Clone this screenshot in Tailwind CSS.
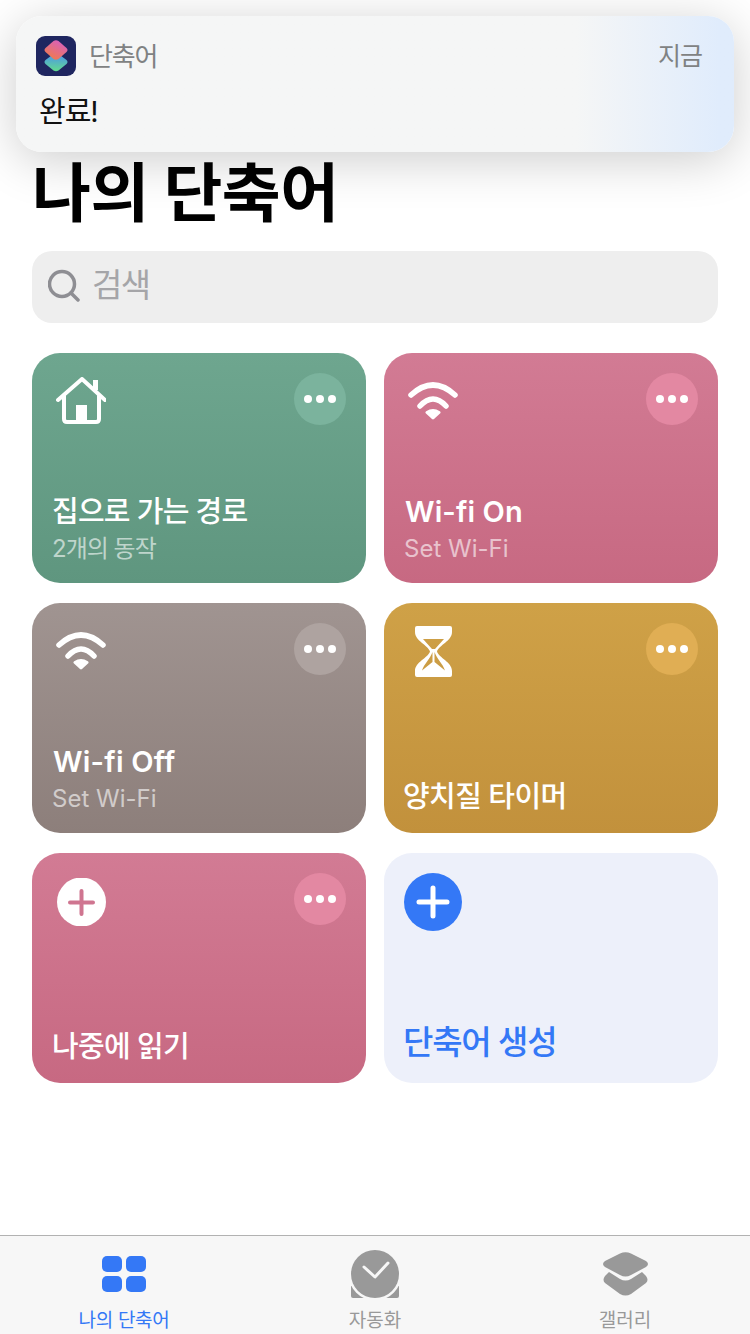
<!DOCTYPE html>
<html lang="ko">
<head>
    <meta charset="UTF-8">
    <meta name="viewport" content="width=device-width, initial-scale=1.0">
    <title>나의 단축어</title>
    <script src="https://cdn.jsdelivr.net/npm/@tailwindcss/browser@4"></script>
</head>
<body class="bg-white font-['Inter','Noto_Sans_CJK_KR',sans-serif]">
<div class="relative w-[750px] h-[1334px] overflow-hidden flex flex-col">

    <!-- notification banner -->
    <div class="absolute left-4 top-4 w-[718px] h-[136px] rounded-[26px] bg-gradient-to-r from-[#f5f6f6] from-78% to-[#e0ecfc] to-98% shadow-[0_8px_50px_rgba(0,0,0,0.2)] z-10">
        <div class="flex items-center justify-between pl-5 pr-8 pt-5">
            <div class="flex items-center gap-[13px]">
                <svg width="40" height="40" viewBox="0 0 40 40">
                    <defs>
                        <linearGradient id="s1" x1="0.8" y1="0" x2="0.2" y2="1"><stop offset="0" stop-color="#d65fc4"/><stop offset="1" stop-color="#f27c45"/></linearGradient>
                        <linearGradient id="s2" x1="0.5" y1="0" x2="0.5" y2="1"><stop offset="0" stop-color="#4a8ff2"/><stop offset="1" stop-color="#62dc8e"/></linearGradient>
                    </defs>
                    <rect width="40" height="40" rx="9" fill="#1f2660"/>
                    <path d="M17.500 18 Q20 16 22.500 18 L30.500 24 Q32.500 26 30.500 28 L22.500 34.500 Q20 36 17.500 34.500 L9.500 28 Q7.500 26 9.500 24 Z" fill="url(#s2)"/>
                    <path d="M17.500 5 Q20 3.500 22.500 5 L30.500 12 Q32.500 14 30.500 16 L22.500 23 Q20 24.500 17.500 23 L9.500 16 Q7.500 14 9.500 12 Z" fill="url(#s1)"/>
                </svg>
                <span class="text-[26px] text-[#7f8283] leading-none tracking-[-1.2px] mt-[2px]">단축어</span>
            </div>
            <span class="text-[25px] text-[#7f8283] leading-none tracking-[-1px]">지금</span>
        </div>
        <p class="pl-[23px] mt-4 text-[29px] leading-[40px] text-[#111] tracking-[-1px]">완료!</p>
    </div>

    <main class="flex-1 px-8 pt-[153px]">
        <h1 class="text-[64px] leading-[80px] font-bold text-black tracking-[-0.5px]">나의 단축어</h1>

        <div class="mt-[18px] h-[72px] rounded-[20px] bg-[#eeeeee] flex items-center pl-4 gap-3">
            <svg width="32" height="36" viewBox="0 0 32 36" fill="none" stroke="#8e8e93" stroke-width="3.500" stroke-linecap="round">
                <circle cx="14" cy="15" r="12.500"/>
                <path d="M23 24 L30 31"/>
            </svg>
            <span class="text-[33px] text-[#a5a5a8] leading-none tracking-[-1.5px] -mt-1">검색</span>
        </div>

        <div class="mt-[30px] grid grid-cols-[334px_334px] gap-x-[18px] gap-y-5">

            <div class="h-[230px] rounded-[28px] bg-gradient-to-b from-[#6ea68f] to-[#5f967f] flex flex-col justify-between px-5 pt-5 pb-4">
                <div class="flex justify-between items-start">
                    <svg class="ml-1 mt-1" width="50" height="48" viewBox="0 0 50 48" fill="none" stroke="#fff" stroke-width="4" stroke-linecap="round" stroke-linejoin="round">
                        <path d="M2 23 L26 2 L49 23"/>
                        <path d="M8 19 V42 Q8 45 11 45 H40 Q43 45 43 42 V19"/>
                        <path d="M39.500 3 V13" stroke-width="5" stroke-linecap="butt"/>
                        <rect x="20" y="28" width="11" height="16" fill="#fff" stroke="none"/>
                    </svg>
                    <div class="w-[52px] h-[52px] rounded-full bg-[#7bb39d] flex items-center justify-center gap-1">
                        <span class="w-2 h-2 rounded-full bg-white"></span><span class="w-2 h-2 rounded-full bg-white"></span><span class="w-2 h-2 rounded-full bg-white"></span>
                    </div>
                </div>
                <div>
                    <p class="text-[29px] leading-[38px] font-medium text-white tracking-[-0.75px]">집으로 가는 경로</p>
                    <p class="text-[24px] leading-[36px] text-white/60 tracking-[-1px]">2개의 동작</p>
                </div>
            </div>

            <div class="h-[230px] rounded-[28px] bg-gradient-to-b from-[#d27b94] to-[#c76982] flex flex-col justify-between px-5 pt-5 pb-4">
                <div class="flex justify-between items-start">
                    <svg class="ml-1 mt-[9px]" width="50" height="38" viewBox="0 0 50 38">
                        <path d="M3 13 Q25 -7 47 13 M12 24 Q25 10 38 24" fill="none" stroke="#fff" stroke-width="5.500" stroke-linecap="round"/>
                        <path d="M25 36 L19 30.500 Q25 26.500 31 30.500 Z" fill="#fff" stroke="#fff" stroke-width="3" stroke-linejoin="round"/>
                    </svg>
                    <div class="w-[52px] h-[52px] rounded-full bg-[#e388a2] flex items-center justify-center gap-1">
                        <span class="w-2 h-2 rounded-full bg-white"></span><span class="w-2 h-2 rounded-full bg-white"></span><span class="w-2 h-2 rounded-full bg-white"></span>
                    </div>
                </div>
                <div>
                    <p class="text-[29px] leading-[38px] font-semibold text-white tracking-[0.1px] pl-px">Wi-fi On</p>
                    <p class="text-[24px] leading-[36px] text-white/60">Set Wi-Fi</p>
                </div>
            </div>

            <div class="h-[230px] rounded-[28px] bg-gradient-to-b from-[#a09491] to-[#8d7f7b] flex flex-col justify-between px-5 pt-5 pb-4">
                <div class="flex justify-between items-start">
                    <svg class="ml-1 mt-[9px]" width="50" height="38" viewBox="0 0 50 38">
                        <path d="M3 13 Q25 -7 47 13 M12 24 Q25 10 38 24" fill="none" stroke="#fff" stroke-width="5.500" stroke-linecap="round"/>
                        <path d="M25 36 L19 30.500 Q25 26.500 31 30.500 Z" fill="#fff" stroke="#fff" stroke-width="3" stroke-linejoin="round"/>
                    </svg>
                    <div class="w-[52px] h-[52px] rounded-full bg-[#aea3a0] flex items-center justify-center gap-1">
                        <span class="w-2 h-2 rounded-full bg-white"></span><span class="w-2 h-2 rounded-full bg-white"></span><span class="w-2 h-2 rounded-full bg-white"></span>
                    </div>
                </div>
                <div>
                    <p class="text-[29px] leading-[38px] font-semibold text-white tracking-[0.2px] pl-px">Wi-fi Off</p>
                    <p class="text-[24px] leading-[36px] text-white/60">Set Wi-Fi</p>
                </div>
            </div>

            <div class="h-[230px] rounded-[28px] bg-gradient-to-b from-[#cfa147] to-[#c2913c] flex flex-col justify-between px-5 pt-5 pb-[17px]">
                <div class="flex justify-between items-start">
                    <svg class="ml-[11px] mt-[3px]" width="37" height="51" viewBox="0 0 37 51" fill="#fff">
                        <path fill-rule="evenodd" d="M2 0 H35 Q37 0 37 2 V6 C37 15 24 19 22 25.500 C24 32 37 36 37 45 V49 Q37 51 35 51 H2 Q0 51 0 49 V45 C0 36 13 32 15 25.500 C13 19 0 15 0 6 V2 Q0 0 2 0 Z M8 13 H29 L20 23 H17 Z M17.500 26 V36 L7 44.500 C9 38 15 33 17.500 26 Z M19.500 26 V36 L30 44.500 C28 38 22 33 19.500 26 Z"/>
                    </svg>
                    <div class="w-[52px] h-[52px] rounded-full bg-[#e0ae54] flex items-center justify-center gap-1">
                        <span class="w-2 h-2 rounded-full bg-white"></span><span class="w-2 h-2 rounded-full bg-white"></span><span class="w-2 h-2 rounded-full bg-white"></span>
                    </div>
                </div>
                <p class="text-[29px] leading-[38px] font-medium text-white tracking-[-0.6px] -ml-px">양치질 타이머</p>
            </div>

            <div class="h-[230px] rounded-[28px] bg-gradient-to-b from-[#d27b94] to-[#c76982] flex flex-col justify-between px-5 pt-5 pb-[17px]">
                <div class="flex justify-between items-start">
                    <svg class="ml-[5px] mt-[5px]" width="49" height="48" viewBox="0 0 49 48">
                        <circle cx="24.500" cy="24" r="24.500" fill="#fff"/>
                        <path d="M13 24.500 H36 M24.500 13 V36" stroke="#cf7590" stroke-width="4" stroke-linecap="round"/>
                    </svg>
                    <div class="w-[52px] h-[52px] rounded-full bg-[#e388a2] flex items-center justify-center gap-1">
                        <span class="w-2 h-2 rounded-full bg-white"></span><span class="w-2 h-2 rounded-full bg-white"></span><span class="w-2 h-2 rounded-full bg-white"></span>
                    </div>
                </div>
                <p class="text-[29px] leading-[38px] font-medium text-white tracking-[-0.7px]">나중에 읽기</p>
            </div>

            <div class="h-[230px] rounded-[28px] bg-[#edf0fa] flex flex-col justify-between px-5 pt-5 pb-[19px]">
                <svg width="58" height="58" viewBox="0 0 58 58">
                    <circle cx="29" cy="29" r="29" fill="#3478f6"/>
                    <path d="M15 29 H43 M29 15 V43" stroke="#fff" stroke-width="5" stroke-linecap="round"/>
                </svg>
                <p class="text-[33px] leading-[44px] font-medium text-[#3478f6] tracking-[-1.2px] -ml-px">단축어 생성</p>
            </div>
        </div>
    </main>

    <!-- tab bar -->
    <nav class="h-[99px] border-t border-[#b2b2b2] bg-[#f7f7f7] grid grid-cols-3 overflow-hidden">
        <div class="flex flex-col items-center">
            <svg class="mt-5 -ml-[2px]" width="44" height="36" viewBox="0 0 44 36" fill="#3478f6">
                <rect x="0" y="0" width="20" height="16" rx="5"/><rect x="24" y="0" width="20" height="16" rx="5"/>
                <rect x="0" y="20" width="20" height="16" rx="5"/><rect x="24" y="20" width="20" height="16" rx="5"/>
            </svg>
            <span class="mt-4 -ml-[2px] text-[19px] leading-[26px] text-[#3478f6] tracking-[-0.3px]">나의 단축어</span>
        </div>
        <div class="flex flex-col items-center">
            <svg class="mt-[14px]" width="48" height="48" viewBox="0 0 48 48">
                <path d="M0 36 H48 V46 Q48 48 46 48 H2 Q0 48 0 46 Z" fill="#999"/>
                <circle cx="24" cy="24" r="26.500" fill="#f7f7f7"/>
                <circle cx="24" cy="24" r="24" fill="#999"/>
                <path d="M13 17 L24 27 L37 13" fill="none" stroke="#f7f7f7" stroke-width="3" stroke-linecap="round" stroke-linejoin="round"/>
            </svg>
            <span class="mt-[10px] text-[19px] leading-[26px] text-[#999]">자동화</span>
        </div>
        <div class="flex flex-col items-center">
            <svg class="mt-4" width="45" height="44" viewBox="0 0 45 44" fill="#999">
                <path d="M17 1.500 Q22.500 -1 28 1.500 L43 9 Q47 12 43 15 L28 23 Q22.500 26 17 23 L2 15 Q-2 12 2 9 Z"/>
                <path d="M6 20 L17 27 Q22.500 30 28 27 L39 20 L43 24 Q46 28 43 31 L28 42 Q22.500 45 17 42 L2 31 Q-1 28 2 24 Z"/>
            </svg>
            <span class="mt-3 text-[19px] leading-[26px] text-[#999]">갤러리</span>
        </div>
    </nav>
</div>
</body>
</html>
